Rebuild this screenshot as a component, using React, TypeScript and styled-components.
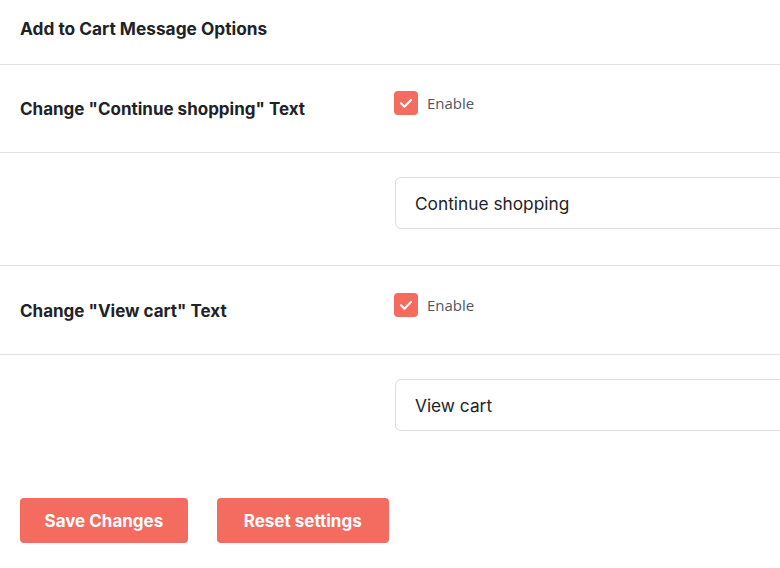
import styled, { createGlobalStyle } from 'styled-components';

const GlobalStyle = createGlobalStyle`
  html, body {
    margin: 0;
    padding: 0;
    background: #fff;
    overflow: hidden;
  }
  body {
    font-family: Inter, "Liberation Sans", sans-serif;
    color: #1d2327;
  }
`;

const Page = styled.div`
  width: 780px;
  height: 568px;
  overflow: hidden;
`;

const Title = styled.h2`
  margin: 0;
  height: 65px;
  display: flex;
  align-items: center;
  padding: 0 20px 8px;
  box-sizing: border-box;
  font-size: 17.3px;
  font-weight: 700;
  color: #1d2327;
  border-bottom: 1px solid #e2e2e2;
`;

const Row = styled.div<{ $top: number; $bottom: number; $last?: boolean }>`
  display: grid;
  grid-template-columns: 395px 440px;
  align-items: center;
  padding: ${(p) => p.$top}px 0 ${(p) => p.$bottom}px;
  border-bottom: ${(p) => (p.$last ? 'none' : '1px solid #e2e2e2')};
`;

const Label = styled.div`
  padding: 4px 0 0 20px;
  font-size: 17px;
  font-weight: 700;
  color: #1d2327;
`;

const CheckLabel = styled.label`
  display: flex;
  align-items: center;
  gap: 9px;
  margin: -8px 0 0 -1px;
  font-family: "Open Sans", "Liberation Sans", sans-serif;
  font-size: 15px;
  color: #50575e;
`;

const Box = styled.span`
  width: 24px;
  height: 24px;
  border-radius: 4px;
  background: #f46b5f;
  display: flex;
  align-items: center;
  justify-content: center;
`;

const TextInput = styled.input`
  width: 440px;
  height: 52px;
  box-sizing: border-box;
  border: 1px solid #dcdcde;
  border-radius: 6px;
  padding: 0 19px;
  font-family: Inter, "Liberation Sans", sans-serif;
  font-size: 17.3px;
  color: #1d2327;
  outline: none;
`;

const Actions = styled.div`
  display: flex;
  gap: 29px;
  padding: 43px 20px 0;
`;

const Button = styled.button<{ $pad: number }>`
  height: 45px;
  padding: 0 ${(p) => p.$pad}px;
  border: none;
  border-radius: 4px;
  background: #f46b5f;
  color: #fff;
  font-family: Inter, "Liberation Sans", sans-serif;
  font-size: 17px;
  font-weight: 700;
  cursor: pointer;
`;

function Check() {
  return (
    <CheckLabel>
      <Box>
        <svg width="16" height="16" viewBox="0 0 16 16" fill="none">
          <path d="M3 8.3l3.4 3.4L13 5" stroke="#fff" strokeWidth="2.2" strokeLinecap="round" strokeLinejoin="round" />
        </svg>
      </Box>
      Enable
    </CheckLabel>
  );
}

export default function App() {
  return (
    <Page>
      <GlobalStyle />
      <Title>Add to Cart Message Options</Title>
      <Row $top={30} $bottom={33}>
        <Label>Change "Continue shopping" Text</Label>
        <Check />
      </Row>
      <Row $top={24} $bottom={36}>
        <div />
        <TextInput defaultValue="Continue shopping" />
      </Row>
      <Row $top={31} $bottom={33}>
        <Label>Change "View cart" Text</Label>
        <Check />
      </Row>
      <Row $top={24} $bottom={24} $last>
        <div />
        <TextInput defaultValue="View cart" />
      </Row>
      <Actions>
        <Button $pad={24.5}>Save Changes</Button>
        <Button $pad={27}>Reset settings</Button>
      </Actions>
    </Page>
  );
}
